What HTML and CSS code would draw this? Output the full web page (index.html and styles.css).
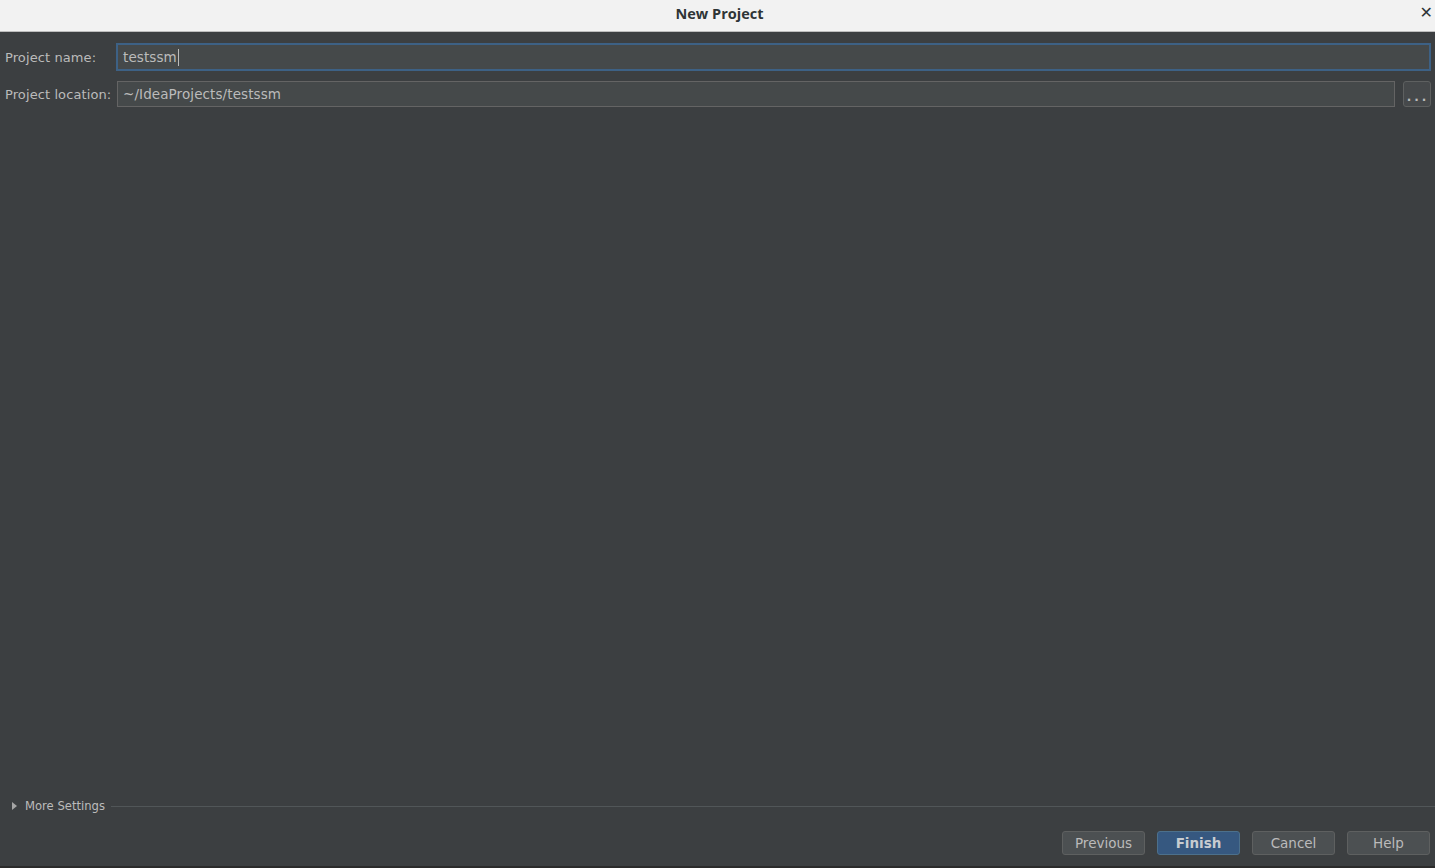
FILE: index.html
```html
<!DOCTYPE html>
<html>
<head>
<meta charset="utf-8">
<link rel="stylesheet" href="styles.css">
</head>
<body>
<div class="window">
  <div class="titlebar">
    <span class="title">New Project</span>
    <span class="close">✕</span>
  </div>
  <div class="content">
    <div class="form">
      <div class="row">
        <span class="label">Project name:</span>
        <div class="field focused"><span>testssm</span><span class="caret"></span></div>
      </div>
      <div class="row">
        <span class="label">Project location:</span>
        <div class="field"><span>~/IdeaProjects/testssm</span></div>
        <div class="browse">...</div>
      </div>
    </div>
    <div class="spacer"></div>
    <div class="more">
      <span class="tri"></span>
      <span class="more-text">More Settings</span>
      <span class="sep"></span>
    </div>
    <div class="buttons">
      <div class="btn">Previous</div>
      <div class="btn primary">Finish</div>
      <div class="btn">Cancel</div>
      <div class="btn">Help</div>
    </div>
  </div>
  <div class="bottomline"></div>
</div>
</body>
</html>
```
FILE: styles.css
```css
html, body {
  margin: 0;
  padding: 0;
  width: 1435px;
  height: 868px;
  overflow: hidden;
  background: #3c3f41;
}
.window {
  display: flex;
  flex-direction: column;
  height: 868px;
}
.titlebar {
  height: 31px;
  flex: none;
  background: #f2f2f2;
  border-bottom: 1px solid #bdbdbd;
  position: relative;
  display: flex;
  align-items: center;
  justify-content: center;
}
.title {
  font-family: "Open Sans", "Noto Sans", sans-serif;
  font-weight: 700;
  font-size: 14.5px;
  color: #2e3436;
  margin-left: 4px;
  margin-bottom: 5px;
}
.close {
  position: absolute;
  right: 2px;
  top: 3px;
  font-family: "DejaVu Sans", sans-serif;
  font-weight: 700;
  font-size: 16px;
  color: #2e3436;
}
.content {
  flex: 1;
  display: flex;
  flex-direction: column;
  font-family: "DejaVu Sans", sans-serif;
  font-size: 13px;
  color: #bbbbbb;
}
.form {
  padding: 11px 4px 0 5px;
  display: flex;
  flex-direction: column;
  gap: 10px;
}
.row {
  display: flex;
  align-items: center;
}
.label {
  width: 111px;
  flex: none;
  white-space: nowrap;
  letter-spacing: 0.1px;
}
.field {
  flex: 1;
  height: 24px;
  background: #45494a;
  border: 1px solid #646464;
  display: flex;
  align-items: center;
  padding-left: 5px;
  font-size: 13.5px;
  letter-spacing: 0.1px;
  margin-left: 1px;
}
.focused {
  height: 24px;
  border: 2px solid #3d6185;
  margin-left: 0;
  padding-left: 5px;
}
.caret {
  width: 1px;
  height: 17px;
  background: #bbbbbb;
  margin-left: 1px;
}
.browse {
  flex: none;
  width: 24px;
  height: 24px;
  margin-left: 8px;
  margin-right: 0;
  background: #46494b;
  border: 1px solid #5e6060;
  border-radius: 3px;
  display: flex;
  align-items: flex-end;
  justify-content: center;
  letter-spacing: 3px;
  padding-left: 2px;
  line-height: 17px;
  font-size: 12px;
  font-weight: 700;
  box-sizing: content-box;
}
.spacer {
  flex: 1;
}
.more {
  display: flex;
  align-items: center;
  height: 16px;
  padding-left: 12px;
  margin-bottom: 1px;
}
.tri {
  width: 0;
  height: 0;
  border-left: 5px solid #a5a5a5;
  border-top: 4px solid transparent;
  border-bottom: 4px solid transparent;
}
.more-text {
  margin-left: 8px;
  font-size: 11.6px;
}
.sep {
  flex: 1;
  height: 1px;
  background: #515658;
  margin-left: 6px;
}
.buttons {
  display: flex;
  justify-content: flex-end;
  gap: 12px;
  padding: 16px 5px 11px 0;
}
.btn {
  width: 81px;
  height: 22px;
  border: 1px solid #5e6060;
  border-radius: 3px;
  background: #4c5052;
  display: flex;
  align-items: center;
  justify-content: center;
  font-size: 13.5px;
  color: #bbbbbb;
}
.primary {
  background: #365880;
  border-color: #4c708c;
  font-weight: 700;
  color: #c8ccd0;
}
.bottomline {
  height: 2px;
  flex: none;
  background: #2b2b2b;
}
```
